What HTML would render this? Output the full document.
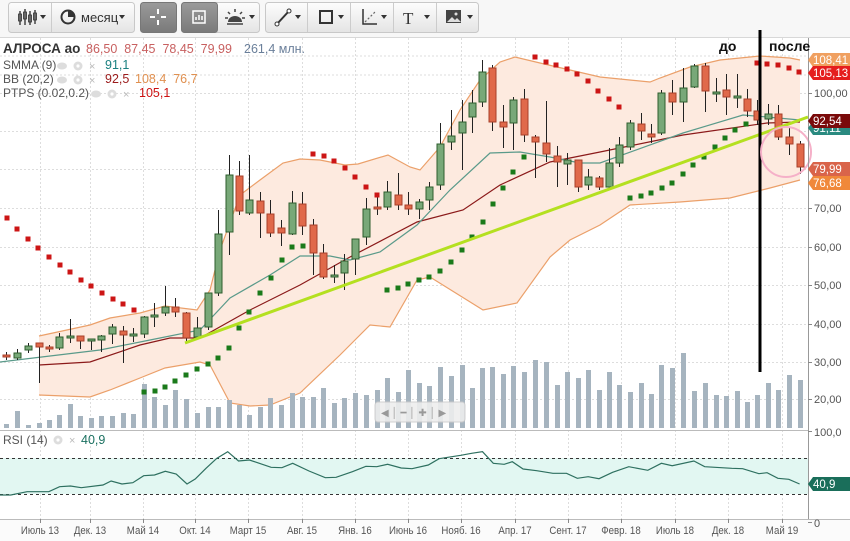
<!DOCTYPE html>
<html><head><meta charset="utf-8"><style>
html,body{margin:0;padding:0;background:#fff;width:850px;height:541px;overflow:hidden;font-family:"Liberation Sans",sans-serif}
svg{display:block}
</style></head><body>
<svg id="s" width="850" height="541" xmlns="http://www.w3.org/2000/svg" font-family="Liberation Sans, sans-serif">
<defs>
<linearGradient id="bt" x1="0" y1="0" x2="0" y2="1"><stop offset="0" stop-color="#fdfdfd"/><stop offset="1" stop-color="#e4e4e4"/></linearGradient>
<linearGradient id="bd" x1="0" y1="0" x2="0" y2="1"><stop offset="0" stop-color="#9a9a9a"/><stop offset="1" stop-color="#7a7a7a"/></linearGradient>
</defs>
<rect x="0" y="0" width="850" height="37" fill="#f7f7f7"/>
<line x1="0" y1="37.5" x2="850" y2="37.5" stroke="#d8d8d8"/>
<g id="grid"></g>
<g id="bands"></g>
<g id="vol"></g>
<g id="cdl"></g>
<g id="dots"></g>
<line x1="185" y1="343" x2="808" y2="117" stroke="#b4e020" stroke-width="3"/>
<line x1="760" y1="30" x2="760" y2="372" stroke="#000" stroke-width="3"/>
<circle cx="786" cy="152" r="25" fill="none" stroke="#f5b0c8" stroke-width="2"/>
<g id="rsi"></g>
<g id="axis"></g>
<g id="tb"></g>
<g font-size="14" font-weight="bold" fill="#111">
<text x="719" y="51">до</text><text x="769" y="51">после</text></g>
<g font-size="12.5">
<text x="3" y="53" font-weight="bold" fill="#333" font-size="13.5">АЛРОСА ао</text>
<text x="86" y="53" fill="#c86060">86,50 &#160;87,45 &#160;78,45 &#160;79,99</text>
<text x="244" y="53" fill="#6a7f9a">261,4 млн.</text>
<text x="3" y="69" fill="#555" font-size="12">SMMA (9)</text><text x="105" y="69" fill="#1a8080">91,1</text>
<text x="3" y="83" fill="#555" font-size="12">BB (20,2)</text><text x="105" y="83" fill="#9b1b1b">92,5</text><text x="135" y="83" fill="#e09050">108,4 &#160;76,7</text>
<text x="3" y="97" fill="#555" font-size="12">PTPS (0.02,0.2)</text><text x="139" y="97" fill="#cc1111">105,1</text>
<text x="3" y="444" fill="#555" font-size="12">RSI (14)</text><text x="81" y="444" fill="#1a7060">40,9</text>
</g>
<g id="icons" fill="#ccc"></g>
</svg>
<script>
const NS="http://www.w3.org/2000/svg";
function el(p,t,a,txt){const e=document.createElementNS(NS,t);for(const k in a)e.setAttribute(k,a[k]);if(txt!==undefined)e.textContent=txt;document.getElementById(p).appendChild(e);return e;}
// grid
const mx=[40,90,143,195,248,302,355,408,461,515,568,621,675,728,782];
const names=["Июль 13","Дек. 13","Май 14","Окт. 14","Март 15","Авг. 15","Янв. 16","Июнь 16","Нояб. 16","Апр. 17","Сент. 17","Февр. 18","Июль 18","Дек. 18","Май 19"];
mx.forEach(x=>{el("grid","line",{x1:x+.5,y1:38,x2:x+.5,y2:519,stroke:"#ddd","stroke-dasharray":"2,2"})});
const py={100:93,90:131,80:169,70:208,60:247,50:285,40:324,30:362,20:399};
for(const k in py){el("grid","line",{x1:0,y1:py[k]+.5,x2:808,y2:py[k]+.5,stroke:"#ddd","stroke-dasharray":"2,2"})}
[56,75].forEach(y=>el("grid","line",{x1:0,y1:y,x2:808,y2:y,stroke:"#ddd","stroke-dasharray":"2,2"}));
// bands
const up=[[39,336],[90,325],[110,318],[140,313],[165,306],[197,310],[210,290],[220,250],[240,195],[260,180],[283,163],[300,159],[320,160],[345,165],[358,164],[388,155],[410,167],[420,170],[440,147],[460,110],[480,80],[500,62],[515,57],[540,63],[570,70],[600,77],[650,82],[660,78],[690,67],[720,60],[760,56],[790,58],[800,60]];
const lo=[[39,395],[90,397],[110,390],[140,378],[165,368],[200,362],[210,365],[230,403],[250,406],[270,405],[300,393],[340,355],[370,325],[390,327],[417,280],[430,277],[483,310],[517,303],[550,257],[570,240],[600,225],[630,205],[680,202],[730,198],[770,188],[800,180]];
const pts=a=>a.map(p=>p.join(",")).join(" ");
el("bands","polygon",{points:pts(up.concat(lo.slice().reverse())),fill:"#fdeadf"});
el("bands","polyline",{points:pts(up),fill:"none",stroke:"#eba06a","stroke-width":1.2});
el("bands","polyline",{points:pts(lo),fill:"none",stroke:"#eba06a","stroke-width":1.2});
const mid=[[39,365],[90,362],[140,345],[170,338],[200,338],[250,310],[300,285],[350,257],[417,222],[463,210],[500,185],[550,162],[600,152],[683,135],[767,123],[800,122]];
el("bands","polyline",{points:pts(mid),fill:"none",stroke:"#8b1a1a","stroke-width":1.2});
const tl=[[0,362],[50,356],[100,350],[150,340],[200,330],[230,298],[270,275],[300,256],[330,256],[350,260],[380,252],[417,225],[450,190],[490,153],[520,152],[550,157],[580,163],[600,163],[683,133],[743,115],[767,117],[800,120]];
el("bands","polyline",{points:pts(tl),fill:"none",stroke:"#5a9a8a","stroke-width":1.2});
// candles
const C=[[6,355,357,'r',352,360],[17,353,358,'g',349,360],[28,346,350,'g',343,353],[39,343,347,'r',343,383],[49,347,349,'r',345,352],[59,337,348,'g',333,350],[70,336,338,'g',319,343],[80,336,341,'r',336,349],[91,339,341,'g',339,350],[101,336,340,'g',335,352],[112,327,334,'g',324,344],[123,331,335,'r',326,363],[133,334,336,'g',328,342],[144,317,334,'g',316,338],[154,315,317,'g',303,327],[165,307,313,'g',286,316],[175,307,312,'r',298,317],[186,313,338,'r',312,341],[197,328,337,'g',317,336],[208,293,327,'g',293,330],[218,234,293,'g',210,296],[229,175,232,'g',155,255],[239,176,211,'r',161,215],[249,200,213,'g',155,215],[260,201,213,'r',192,238],[270,214,233,'r',200,237],[281,228,233,'r',220,246],[292,203,234,'g',191,235],[302,204,226,'r',192,235],[313,225,253,'r',219,275],[323,253,277,'r',244,279],[334,275,277,'g',265,283],[344,261,273,'g',254,290],[355,239,259,'g',239,275],[366,209,237,'g',198,245],[377,207,209,'r',195,215],[387,192,207,'g',181,210],[398,195,205,'r',173,210],[408,205,209,'r',192,215],[419,202,209,'g',199,219],[429,187,200,'g',182,210],[440,144,185,'g',123,190],[451,136,142,'g',110,150],[462,122,133,'g',100,170],[472,103,117,'g',90,133],[482,72,102,'g',60,107],[492,68,122,'r',65,131],[503,122,127,'r',105,148],[513,100,123,'g',97,150],[524,99,135,'r',89,142],[535,137,142,'r',135,178],[546,143,154,'r',101,162],[557,156,162,'r',146,187],[567,160,164,'g',153,185],[578,160,187,'r',160,192],[588,177,185,'g',169,190],[599,178,187,'r',176,190],[609,163,187,'g',148,188],[619,145,163,'g',137,167],[630,123,147,'g',120,150],[641,124,131,'r',113,140],[651,134,137,'r',124,143],[661,93,133,'g',90,135],[672,93,102,'r',80,115],[683,88,102,'g',68,122],[694,66,87,'g',64,88],[705,66,91,'r',63,112],[716,92,94,'g',78,102],[726,90,97,'r',74,115],[737,96,98,'g',74,108],[747,99,111,'r',89,117],[757,111,120,'r',100,125],[768,114,119,'g',104,125],[778,114,137,'r',105,140],[789,137,144,'r',128,155],[800,144,167,'r',141,174]];
C.forEach(c=>{const[x,t,b,k,h,l]=c;
 el("cdl","line",{x1:x+.5,y1:h,x2:x+.5,y2:l,stroke:"#222","stroke-width":1});
 const g=k=='g';
 el("cdl","rect",{x:x-3,y:t,width:7,height:Math.max(2,b-t),fill:g?"#78a878":"#e0694a",stroke:g?"#2e5e2e":"#a8402a","stroke-width":1});});
// volume
const V=[424,411,425,423,420,415,404,416,418,416,416,413,414,384,397,405,390,399,413,407,407,400,405,415,407,398,405,393,397,397,388,403,398,393,395,390,378,392,370,383,386,367,376,365,388,368,367,374,366,372,360,362,385,372,378,370,390,372,385,392,383,394,365,368,353,391,383,395,396,391,402,395,383,390,375,380];
C.forEach((c,i)=>{const y=V[i]||400;el("vol","rect",{x:c[0]-2,y:y,width:5,height:428-y,fill:"#a6b4bf"})});
el("vol","rect",{x:375,y:402,width:90,height:20,rx:3,fill:"#eee",stroke:"#ccc",opacity:.9});
el("vol","text",{x:381,y:416,"font-size":10,fill:"#999"},"◀ │ ━ │ ✚ │ ▶");
// dots
const R=[[7,218],[17,229],[28,239],[38,248],[49,257],[60,265],[70,272],[81,280],[91,286],[102,293],[113,299],[123,304],[134,310],[313,154],[324,156],[334,161],[345,168],[355,177],[366,187],[377,195],[535,57],[546,62],[556,65],[567,69],[577,74],[588,81],[598,91],[609,99],[619,107],[757,63],[767,64],[778,65],[789,68],[799,72]];
const G=[[144,392],[155,391],[165,387],[175,381],[186,375],[197,369],[208,364],[218,358],[229,348],[239,328],[249,312],[260,293],[271,278],[282,260],[292,247],[303,246],[387,290],[398,288],[408,284],[419,280],[429,277],[440,271],[451,262],[462,250],[472,237],[483,222],[493,204],[503,188],[513,172],[524,157],[630,198],[641,196],[651,193],[662,188],[672,183],[683,174],[693,165],[704,157],[715,147],[725,138],[735,130],[746,124]];
R.forEach(p=>el("dots","rect",{x:p[0]-2.5,y:p[1]-2.5,width:5,height:5,fill:"#cc1515"}));
G.forEach(p=>el("dots","rect",{x:p[0]-2.5,y:p[1]-2.5,width:5,height:5,fill:"#1a7a1a"}));
// rsi
el("rsi","line",{x1:0,y1:430.5,x2:808,y2:430.5,stroke:"#bbb"});
el("rsi","rect",{x:0,y:458,width:808,height:36,fill:"#e2f7f2"});
el("rsi","line",{x1:0,y1:458.5,x2:808,y2:458.5,stroke:"#333","stroke-dasharray":"3,3"});
el("rsi","line",{x1:0,y1:494.5,x2:808,y2:494.5,stroke:"#333","stroke-dasharray":"3,3"});
const RS=[[0,285],[20,285],[50,275],[90,275],[110,260],[130,258],[150,263],[190,255],[205,243],[225,252],[245,248],[265,227],[285,225],[305,214],[325,222],[345,252],[360,237],[380,205],[400,175],[420,155],[440,183],[460,180],[500,202],[520,203],[540,190],[570,213],[600,233],[620,232],[650,215],[675,199],[695,200],[715,193],[740,204],[760,206],[790,195],[810,176],[850,166],[870,160],[890,155],[910,190],[930,193],[945,185],[965,207],[990,212],[1020,220],[1045,220],[1065,235],[1085,230],[1105,236],[1130,217],[1160,200],[1195,211],[1220,190],[1240,197],[1280,183],[1300,200],[1350,205],[1370,206],[1400,221],[1415,218],[1435,235],[1455,238],[1475,252]];
el("rsi","polyline",{points:RS.map(p=>(p[0]*0.5421).toFixed(1)+","+(400+p[1]/3).toFixed(1)).join(" "),fill:"none",stroke:"#2e7060","stroke-width":1.2});
// axes
el("axis","line",{x1:808.5,y1:38,x2:808.5,y2:519,stroke:"#999"});
el("axis","line",{x1:0,y1:519.5,x2:850,y2:519.5,stroke:"#bbb"});
el("axis","rect",{x:0,y:520,width:850,height:21,fill:"#fbfbfb"});
mx.forEach((x,i)=>{el("axis","line",{x1:x+.5,y1:519,x2:x+.5,y2:523,stroke:"#888"});
 el("axis","text",{x:x,y:534,"font-size":11,fill:"#555","text-anchor":"middle","font-family":"Liberation Sans Narrow, Liberation Sans, sans-serif",transform:`translate(${x} 0) scale(0.88 1) translate(${-x} 0)`},names[i]);});
const labs=[["100,00",93],["70,00",208],["60,00",247],["50,00",285],["40,00",324],["30,00",362],["20,00",399]];
labs.forEach(l=>{el("axis","line",{x1:808,y1:l[1]+.5,x2:812,y2:l[1]+.5,stroke:"#888"});el("axis","text",{x:814,y:l[1]+4,"font-size":11,fill:"#555"},l[0])});
[["100,0",432],["0",523]].forEach(l=>{el("axis","line",{x1:808,y1:l[1]-0.5,x2:812,y2:l[1]-.5,stroke:"#888"});el("axis","text",{x:814,y:l[1]+4,"font-size":11,fill:"#555"},l[0])});
function tag(t,y,bg,fg){el("axis","path",{d:`M808 ${y} L813 ${y-7} L850 ${y-7} L850 ${y+7} L813 ${y+7} Z`,fill:bg});el("axis","text",{x:813,y:y+4,"font-size":11.5,fill:fg},t)}
tag("108,41",60,"#f0a060","#fff");tag("105,13",73,"#e51e1e","#fff");tag("91,11",128,"#2a8a80","#fff");tag("92,54",121,"#7a0a0a","#fff");tag("79,99",169,"#d9644a","#fff");tag("76,68",183,"#f0883a","#fff");tag("40,9",484,"#1a6e5a","#fff");
// toolbar
function btn(x,w,dark,r){el("tb","rect",{x:x+.5,y:2.5,width:w,height:30,rx:r?3:0,fill:dark?"url(#bd)":"url(#bt)",stroke:"#c8c8c8"})}
el("tb","rect",{x:8.5,y:2.5,width:126,height:30,rx:3,fill:"url(#bt)",stroke:"#c8c8c8"});
el("tb","line",{x1:51.5,y1:3,x2:51.5,y2:32,stroke:"#ccc"});
el("tb","rect",{x:140.5,y:2.5,width:36,height:30,rx:3,fill:"url(#bd)",stroke:"#777"});
el("tb","rect",{x:181.5,y:2.5,width:78,height:30,rx:3,fill:"url(#bt)",stroke:"#c8c8c8"});
el("tb","rect",{x:181.5,y:2.5,width:36,height:30,rx:3,fill:"url(#bd)",stroke:"#777"});
el("tb","rect",{x:265.5,y:2.5,width:213,height:30,rx:3,fill:"url(#bt)",stroke:"#c8c8c8"});
[307,350,393,436].forEach(x=>el("tb","line",{x1:x+.5,y1:3,x2:x+.5,y2:32,stroke:"#ccc"}));
const tri=(x)=>el("tb","path",{d:`M${x} 15 L${x+6} 15 L${x+3} 19 Z`,fill:"#333"});
[40,119,249,295,338,381,424,467].forEach(tri);
// icons
el("tb","path",{d:"M20 11v14M25 9v16M30 11v14M35 10v14",stroke:"#444","stroke-width":1.5});
[[18,14],[23,12],[28,15],[33,13]].forEach(p=>el("tb","rect",{x:p[0]+.5,y:p[1],width:3,height:7,fill:"#666",stroke:"#333","stroke-width":.8}));
el("tb","circle",{cx:68,cy:17,r:6.5,fill:"none",stroke:"#333","stroke-width":2});
el("tb","path",{d:"M68 17 L68 10.5 A6.5 6.5 0 0 1 74.5 17 Z",fill:"#333"});
el("tb","text",{x:81,y:22,"font-size":13,fill:"#333"},"месяц");
el("tb","path",{d:"M158 9v5M158 20v5M150 17h5M161 17h5",stroke:"#fff","stroke-width":2});
el("tb","rect",{x:193,y:11,width:12,height:12,fill:"none",stroke:"#fff","stroke-width":1.5});
el("tb","path",{d:"M196 20v-3M199 20v-5M202 20v-4",stroke:"#fff","stroke-width":1.5});
el("tb","path",{d:"M228 22a7 6 0 0 1 14 0z",fill:"#444"});
el("tb","path",{d:"M235 9v3M228 12l2 2M242 12l-2 2M225 18h3M242 18h3M227 24h16",stroke:"#444","stroke-width":1.5});
el("tb","path",{d:"M277 24L289 11",stroke:"#333","stroke-width":2});
el("tb","circle",{cx:277,cy:24,r:2,fill:"#fff",stroke:"#333"});el("tb","circle",{cx:289,cy:11,r:2,fill:"#fff",stroke:"#333"});
el("tb","rect",{x:320,y:11,width:12,height:12,fill:"none",stroke:"#333","stroke-width":2});
el("tb","path",{d:"M363 9v15h14",stroke:"#333","stroke-width":1.5,fill:"none"});
el("tb","path",{d:"M365 22l10-10",stroke:"#666","stroke-width":1.2,"stroke-dasharray":"2,2"});
el("tb","text",{x:403,y:24,"font-size":17,fill:"#333","font-family":"Liberation Serif, serif"},"T");
el("tb","rect",{x:446,y:10,width:15,height:13,fill:"#444"});
el("tb","path",{d:"M447 22l5-5 3 3 2-2 4 4z",fill:"#ddd"});el("tb","circle",{cx:456,cy:14,r:1.5,fill:"#ddd"});
// header eye/gear/x icons
function ico(x,y,eye){if(eye)el("icons","ellipse",{cx:x,cy:y,rx:5,ry:3.5,fill:"#ddd"});
 el("icons","circle",{cx:x+16,cy:y,r:4.5,fill:"#ddd"});el("icons","circle",{cx:x+16,cy:y,r:1.6,fill:"#fff"});
 el("icons","text",{x:x+27,y:y+4,"font-size":11,fill:"#bbb"},"×");}
ico(62,66,1);ico(62,80,1);ico(96,94,1);ico(42,440,0);
</script>
</body></html>
